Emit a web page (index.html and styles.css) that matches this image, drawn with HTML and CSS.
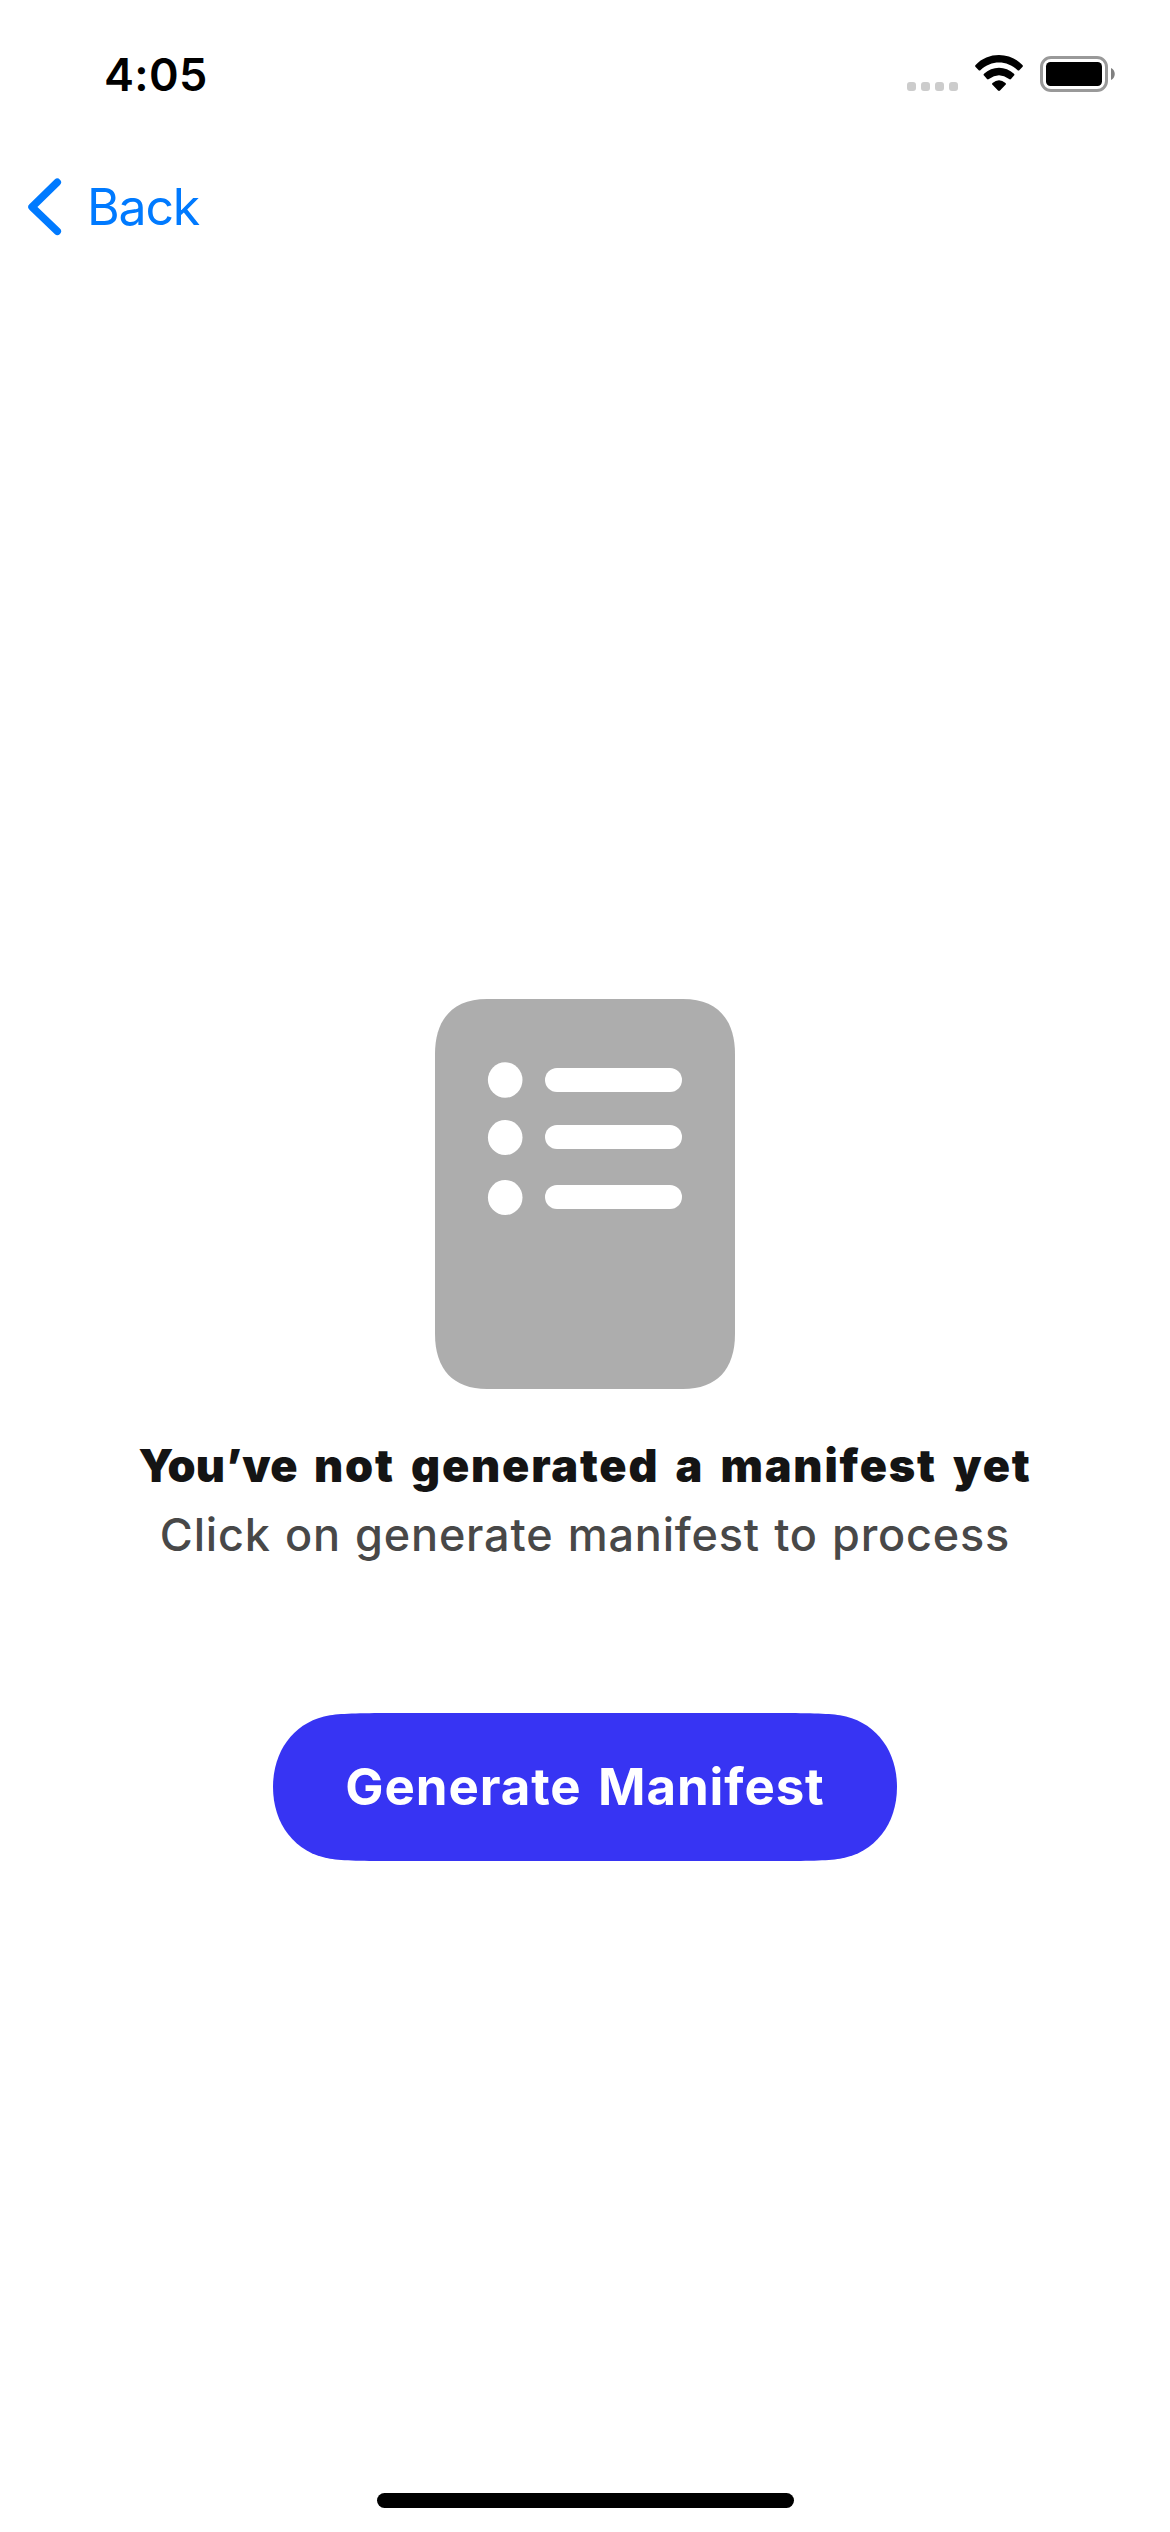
FILE: index.html
```html
<!DOCTYPE html>
<html lang="en">
<head>
<meta charset="utf-8">
<title>Manifest</title>
<link rel="stylesheet" href="styles.css">
</head>
<body>
<div class="screen">
  <header class="status">
    <span class="time">4:05</span>
    <div class="indicators">
      <div class="signal"><i></i><i></i><i></i><i></i></div>
      <svg class="wifi" width="48" height="36" viewBox="0 0 48 36"><path d="M.6 10C13-3.3 35-3.3 47.4 10q1 1 0 2l-2.900 3q-1 1-2.100 0C32 5 16 5 5.600 15q-1.100 1-2.100 0L.6 12q-1-1 0-2zM9 18.800c8.400-8.100 21.600-8.100 30 0q.9.900 0 1.800L36 24q-.9.900-1.900 0-10.100-7.400-20.200 0-1 .9-1.900 0l-3-3.400q-.9-.9 0-1.800zM17.500 28q6.500-5.400 13 0 .9.900 0 1.800L25 35.500q-1 .9-2 0L17.500 29.800q-.9-.9 0-1.800z"/></svg>
      <svg class="battery" width="76" height="36" viewBox="0 0 76 36"><rect x="1.5" y="1.5" width="65" height="33" rx="9.500" fill="none" stroke="#999" stroke-width="3"/><rect x="6" y="6" width="56" height="24" rx="4.500"/><path d="M71 12c5 2 5 10 0 12z" fill="#808080"/></svg>
    </div>
  </header>
  <nav class="nav">
    <svg width="34" height="58" viewBox="0 0 34 58"><path d="M29.300 4.300 4 29l25.300 24.300" fill="none" stroke="#007aff" stroke-width="7.500" stroke-linecap="round" stroke-linejoin="round"/></svg>
    <a class="back">Back</a>
  </nav>
  <main class="empty">
    <svg class="sheet" width="300" height="390" viewBox="0 0 300 390">
      <path fill="#adadad" d="M0 55C0 20 18 0 52 0H248C282 0 300 20 300 55V335C300 370 282 390 248 390H52C18 390 0 370 0 335z"/>
      <g fill="#fff">
        <ellipse cx="70.200" cy="81" rx="17.300" ry="17.800"/><rect x="110" y="69" width="137" height="24" rx="12"/>
        <ellipse cx="70.200" cy="138.500" rx="17.300" ry="17.500"/><rect x="110" y="126" width="137" height="24" rx="12"/>
        <ellipse cx="70.200" cy="198.500" rx="17.300" ry="17.500"/><rect x="110" y="186" width="137" height="24" rx="12"/>
      </g>
    </svg>
    <h1 class="title"><span class="tight">You’ve</span> not generated a manifest yet</h1>
    <p class="hint">Click on generate manifest to process</p>
    <button class="cta">Generate Manifest</button>
  </main>
  <footer class="home"><i></i></footer>
</div>
</body>
</html>
```
FILE: styles.css
```css
* { box-sizing: border-box; }
body { margin: 0; background: #fff; font-family: Inter, "Liberation Sans", sans-serif; }
.screen { width: 1170px; height: 2532px; display: flex; flex-direction: column; }

.status { height: 141px; padding: 47px 54px 0 104px; display: flex; justify-content: space-between; align-items: flex-start; color: #000; }
.time { font-size: 45px; line-height: 56px; font-weight: 600; letter-spacing: .3px; }
.indicators { display: flex; align-items: flex-end; padding-top: 8px; }
.signal { display: flex; gap: 5px; margin-right: 17px; }
.signal i { width: 9px; height: 9px; border-radius: 3px; background: #ccc; }
.wifi { margin-right: 17px; }
.battery { margin-bottom: -1px; }

.nav { height: 132px; padding-left: 28px; display: flex; align-items: center; gap: 25px; }
.back { font-size: 50px; line-height: 60px; font-weight: 400; letter-spacing: -1.2px; color: #007aff; }

.empty { flex: 1; padding-top: 726px; display: flex; flex-direction: column; align-items: center; }
.title { margin: 48px 0 0; font-size: 45px; line-height: 58px; font-weight: 900; letter-spacing: 1.8px; word-spacing: 5.5px; color: #141414; white-space: nowrap; }
.tight { letter-spacing: .3px; }
.hint { margin: 11px 0 0; font-size: 45px; line-height: 58px; font-weight: 500; letter-spacing: .8px; word-spacing: 1.5px; color: #484848; white-space: nowrap; }
.cta {
  margin-top: 149px; width: 624px; height: 148px; padding: 0; border: 0;
  background: #3734f3; color: #fff;
  font: 700 51px/62px Inter, "Liberation Sans", sans-serif;
  letter-spacing: .9px; word-spacing: 3.5px; white-space: nowrap;
  clip-path: path("M0 74C0 37 22 8 57 2.3C70 .3 90 0 125 0H499C534 0 554 .3 567 2.3C602 8 624 37 624 74C624 111 602 140 567 145.7C554 147.7 534 148 499 148H125C90 148 70 147.7 57 145.7C22 140 0 111 0 74Z");
}

.home { height: 39px; display: flex; justify-content: center; align-items: flex-start; }
.home i { width: 417px; height: 15px; border-radius: 7.5px; background: #000; }
```
